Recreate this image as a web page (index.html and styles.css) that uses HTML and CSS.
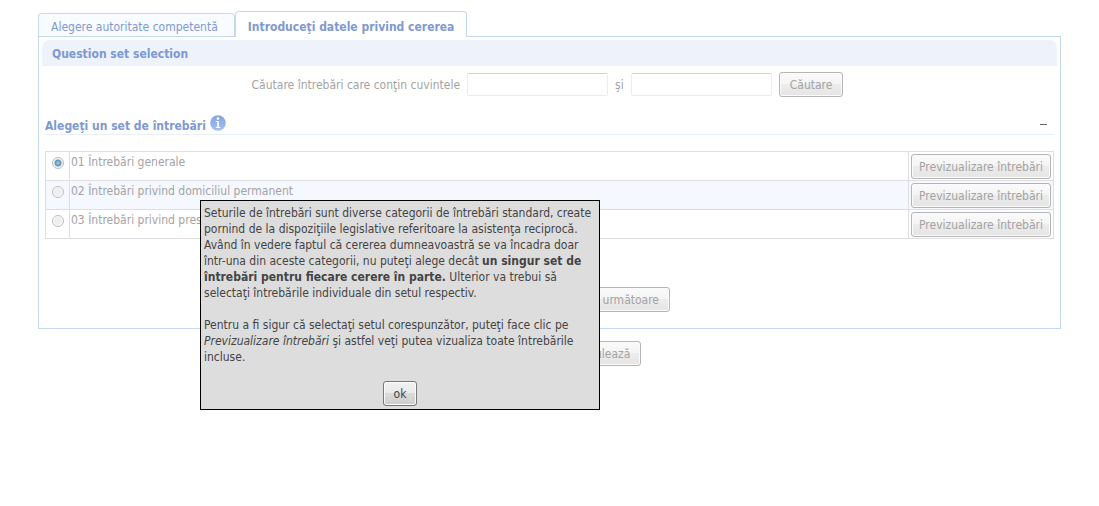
FILE: index.html
```html
<!DOCTYPE html>
<html lang="ro">
<head>
<meta charset="utf-8">
<title>Introduceţi datele privind cererea</title>
<link rel="stylesheet" href="styles.css">
</head>
<body>
<main class="page">
  <nav class="tabs">
    <a class="tab" href="#autoritate">Alegere autoritate competentă</a>
    <a class="tab tab-active" href="#date">Introduceţi datele privind cererea</a>
  </nav>
  <section class="panel">
    <h1 class="panel-title">Question set selection</h1>
    <form class="search">
      <label for="word1">Căutare întrebări care conţin cuvintele</label>
      <input class="field" id="word1" type="text">
      <label for="word2">şi</label>
      <input class="field" id="word2" type="text">
      <button class="btn" type="button">Căutare</button>
    </form>
    <div class="section-head">
      <h2 class="section-title">Alegeţi un set de întrebări</h2>
      <svg class="info" viewBox="0 0 16 16" aria-hidden="true">
        <defs><linearGradient id="ball" x1="0" y1="0" x2="0" y2="1"><stop offset="0" stop-color="#84a3e2"/><stop offset="1" stop-color="#a6bff0"/></linearGradient></defs>
        <circle cx="8" cy="8" r="7.8" fill="url(#ball)"/>
        <circle cx="8" cy="3.6" r="1.3" fill="#fff"/>
        <path d="M5.8 6H8.9V12H10.3V13H5.8V12H7.2V7H5.8Z" fill="#fff"/>
      </svg>
      <button class="collapse" type="button" aria-label="Restrânge"></button>
    </div>
    <table class="sets">
      <tr>
        <td class="pick"><input class="radio" type="radio" name="set" id="s1" checked></td>
        <td class="name"><label for="s1">01 Întrebări generale</label></td>
        <td class="act"><button class="btn" type="button">Previzualizare întrebări</button></td>
      </tr>
      <tr class="alt">
        <td class="pick"><input class="radio" type="radio" name="set" id="s2"></td>
        <td class="name"><label for="s2">02 Întrebări privind domiciliul permanent</label></td>
        <td class="act"><button class="btn" type="button">Previzualizare întrebări</button></td>
      </tr>
      <tr>
        <td class="pick"><input class="radio" type="radio" name="set" id="s3"></td>
        <td class="name"><label for="s3">03 Întrebări privind prestaţii</label></td>
        <td class="act"><button class="btn" type="button">Previzualizare întrebări</button></td>
      </tr>
    </table>
    <div class="steps">
      <button class="btn" type="button">Etapa următoare</button>
    </div>
  </section>
  <div class="actions">
    <button class="btn" type="button">Anulează</button>
  </div>
</main>
<div class="popup" role="dialog">
  <p class="popup-text">Seturile de întrebări sunt diverse categorii de întrebări standard, create<br>pornind de la dispoziţiile legislative referitoare la asistenţa reciprocă.<br>Având în vedere faptul că cererea dumneavoastră se va încadra doar<br>într-una din aceste categorii, nu puteţi alege decât <b>un singur set de<br>întrebări pentru fiecare cerere în parte.</b> Ulterior va trebui să<br>selectaţi întrebările individuale din setul respectiv.</p>
  <p class="popup-text">Pentru a fi sigur că selectaţi setul corespunzător, puteţi face clic pe<br><i>Previzualizare întrebări</i> şi astfel veţi putea vizualiza toate întrebările<br>incluse.</p>
  <button class="btn ok" type="button">ok</button>
</div>
</body>
</html>
```
FILE: styles.css
```css
* { box-sizing: border-box; }
body {
  margin: 0;
  background: #fff;
  color: #a3a3a3;
  font: 12px/16px "DejaVu Sans Condensed", "Noto Sans", sans-serif;
}
button, input { font: inherit; color: inherit; }
.page { padding: 11px 38px 0; }
.tabs { display: flex; align-items: flex-end; }
.tab {
  padding: 5px 16px 2px 12px;
  height: 23px;
  border: 1px solid #c4d8f0;
  border-bottom: 0;
  border-radius: 4px 4px 0 0;
  background: #f8fbff;
  color: #8099d0;
  text-decoration: none;
  white-space: nowrap;
}
.tab-active {
  height: 26px;
  padding: 7px 12px 2px;
  margin-bottom: -1px;
  background: #fff;
  font-weight: bold;
}
.panel { border: 1px solid #c4d8f0; padding: 3px 3px 16px; }
.panel-title {
  margin: 0;
  padding: 6px 10px 4px;
  border-radius: 8px 8px 0 0;
  background: #eef2fa;
  color: #7d99d2;
  font-size: 12px;
}
.search { display: flex; justify-content: center; align-items: center; gap: 7px; margin-top: 6px; padding-right: 4px; }
.field {
  width: 141px;
  height: 23px;
  border: 1px solid #ececf0;
  border-top-color: #cfcfd0;
  border-radius: 2px;
  background: #fff;
}
.btn {
  height: 25px;
  padding: 1px 10px 0;
  border: 1px solid #b5b5b5;
  border-radius: 3px;
  background: linear-gradient(#f9f9f9 0 10%, #f4f4f4 50%, #ececec 50%, #e5e5e5);
  box-shadow: inset 0 0 0 1px #fbfbfb;
  white-space: nowrap;
}
.section-head {
  display: flex;
  align-items: flex-end;
  margin: 17px 3px 0;
  border-bottom: 1px solid #e8f0fa;
  height: 21px;
}
.section-title { margin: 0; color: #7d99d2; font-size: 12px; }
.info { width: 16px; height: 16px; margin: 0 auto 3px 4px; }
.collapse { width: 7px; height: 10px; margin: 0 7px 0 0; padding: 0; border: 0; border-top: 1px solid #666; background: none; }
.sets { width: calc(100% - 6px); margin: 16px 3px 0; border-collapse: collapse; }
.sets td { height: 29px; padding: 0; border: 1px solid #dedede; }
.alt { background: #f5f8ff; }
.sets .pick { width: 24px; text-align: center; vertical-align: top; }
.sets .name { padding: 2px 1px; vertical-align: top; }
.sets .act { width: 145px; padding: 1px 2px; }
.sets .btn { display: block; width: 140px; padding: 1px 0 0; }
.radio {
  appearance: none;
  display: block;
  width: 12px;
  height: 12px;
  margin: 5px auto 0 6px;
  border: 1px solid #bcbcbc;
  border-radius: 50%;
  background: radial-gradient(#efefef 0 50%, #f9f9f9 60%);
}
.radio:checked { background: radial-gradient(circle, #9fd4ea 0, #628fb0 3px, #f4f4f4 4px); }
.steps { display: flex; justify-content: center; margin-top: 48px; padding-left: 128px; }
.actions { display: flex; justify-content: center; margin-top: 12px; padding-left: 112px; }
.popup {
  position: absolute;
  left: 200px;
  top: 200px;
  width: 400px;
  padding: 4px 3px 3px;
  border: 1px solid #000;
  background: #ddd;
  color: #444;
}
.popup-text { margin: 0 0 16px; white-space: nowrap; }
.ok {
  display: block;
  margin: 0 auto;
  border-color: #777;
  background: linear-gradient(#f2f2f2, #e9e9e9 50%, #dadada 50%, #cdcdcd);
}
```
